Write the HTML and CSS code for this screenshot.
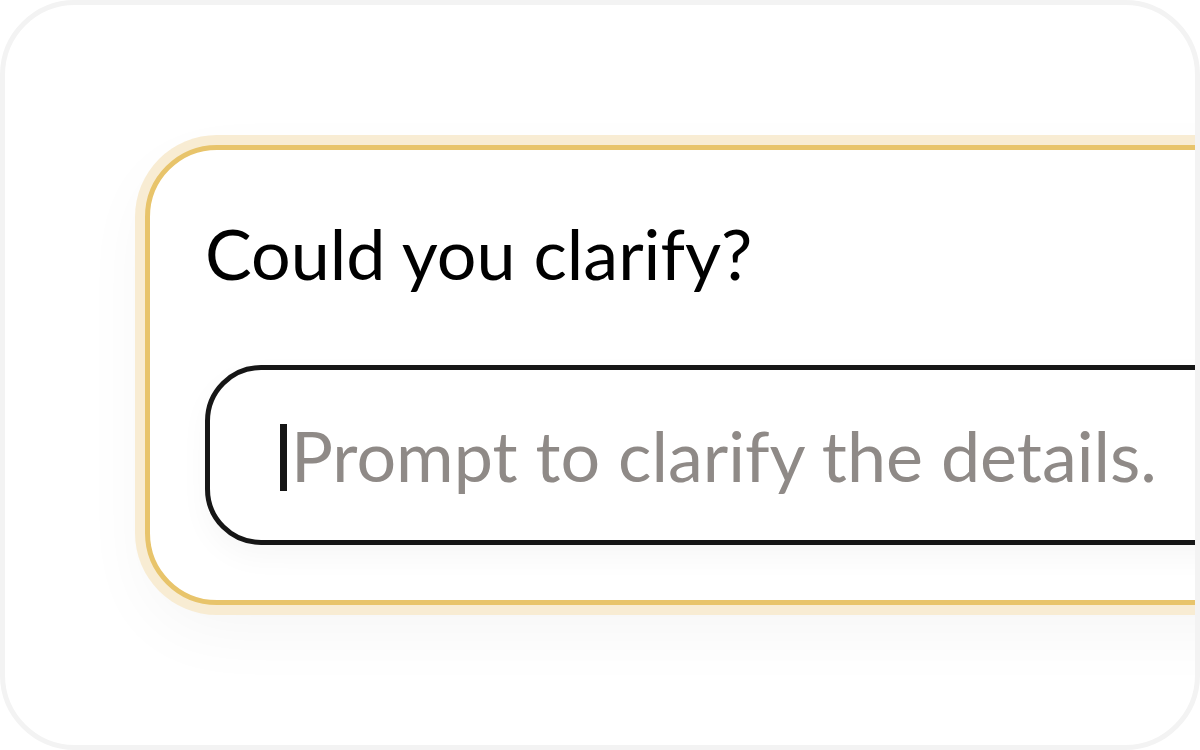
FILE: index.html
```html
<!DOCTYPE html>
<html lang="en">
<head>
<meta charset="utf-8">
<title>Clarify</title>
<link rel="stylesheet" href="styles.css">
</head>
<body>
<div class="frame">
  <div class="card">
    <h1 class="title">Could you clarify?</h1>
    <div class="field">
      <span class="caret"></span>
      <span class="placeholder">Prompt to clarify the details.</span>
    </div>
  </div>
</div>
</body>
</html>
```

FILE: styles.css
```css
* { box-sizing: border-box; }
html, body { margin: 0; padding: 0; background: #ffffff; }
body { font-family: Lato, "Noto Sans", sans-serif; }

.frame {
  width: 1200px;
  height: 750px;
  border: 5px solid #f3f3f3;
  border-radius: 75px;
  background: #ffffff;
  overflow: hidden;
  padding: 140px 0 0 140px;
}

.card {
  width: 1200px;
  height: 460px;
  border: 5px solid #e8c46b;
  border-radius: 72px;
  background: #ffffff;
  box-shadow: 0 0 0 10px #f8ecd3, 0 24px 70px rgba(0, 0, 0, 0.045);
  padding: 61px 0 0 55px;
  display: flex;
  flex-direction: column;
}

.title {
  margin: 0;
  font-family: Lato, "Noto Sans", sans-serif;
  font-weight: 400;
  font-size: 70px;
  line-height: 1.2;
  color: #000000;
  white-space: nowrap;
}

.field {
  margin-top: 70px;
  height: 180px;
  width: 1100px;
  border: 5px solid #161616;
  border-radius: 56px;
  background: #ffffff;
  box-shadow: 0 12px 30px rgba(0, 0, 0, 0.035);
  display: flex;
  align-items: center;
  padding-left: 70px;
}

.caret {
  width: 7px;
  height: 67px;
  background: #151515;
  margin-top: 4px;
}

.placeholder {
  margin-left: 4px;
  font-size: 70px;
  line-height: 1.2;
  color: #8f8a87;
  white-space: nowrap;
}
```
